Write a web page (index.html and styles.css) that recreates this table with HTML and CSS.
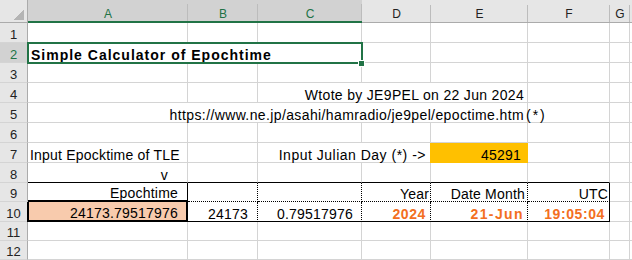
FILE: index.html
```html
<!DOCTYPE html>
<html lang="en">
<head>
    <meta charset="UTF-8">
    <meta name="viewport" content="width=device-width, initial-scale=1.0">
    <title>Simple Calculator of Epochtime</title>
    <link rel="stylesheet" href="styles.css">
</head>
<body>
    <div class="sheet">
        <div class="row">
            <div class="corner"></div>
            <div class="ch sel">A</div>
            <div class="ch sel">B</div>
            <div class="ch sel">C</div>
            <div class="ch">D</div>
            <div class="ch">E</div>
            <div class="ch">F</div>
            <div class="ch">G</div>
            <div class="ch"></div>
        </div>
        <div class="row">
            <div class="rh">1</div>
            <div class="c"></div><div class="c"></div><div class="c"></div><div class="c"></div>
            <div class="c"></div><div class="c"></div><div class="c"></div><div class="c"></div>
        </div>
        <div class="row">
            <div class="rh sel">2</div>
            <div class="c title">Simple Calculator of Epochtime</div>
            <div class="c"></div><div class="c"></div><div class="c"></div><div class="c"></div><div class="c"></div>
        </div>
        <div class="row">
            <div class="rh">3</div>
            <div class="c"></div><div class="c"></div><div class="c"></div><div class="c"></div>
            <div class="c"></div><div class="c"></div><div class="c"></div><div class="c"></div>
        </div>
        <div class="row">
            <div class="rh">4</div>
            <div class="c"></div><div class="c"></div>
            <div class="c r span3 pr3 wide">Wtote by JE9PEL on 22 Jun 2024</div>
            <div class="c"></div><div class="c"></div><div class="c"></div>
        </div>
        <div class="row">
            <div class="rh">5</div>
            <div class="c r span5 pr3 url">https://www.ne.jp/asahi/hamradio/je9pel/epoctime.htm</div>
            <div class="c note">(*)</div>
            <div class="c"></div><div class="c"></div>
        </div>
        <div class="row">
            <div class="rh">6</div>
            <div class="c"></div><div class="c"></div><div class="c"></div><div class="c"></div>
            <div class="c"></div><div class="c"></div><div class="c"></div><div class="c"></div>
        </div>
        <div class="row">
            <div class="rh">7</div>
            <div class="c">Input Epocktime of TLE</div>
            <div class="c"></div>
            <div class="c r span2 pr4 julian">Input Julian Day (*) -&gt;</div>
            <div class="c r jd">45291</div>
            <div class="c"></div><div class="c"></div><div class="c"></div>
        </div>
        <div class="row">
            <div class="rh">8</div>
            <div class="c r tb arrow">v</div>
            <div class="c tb"></div><div class="c tb"></div><div class="c tb"></div>
            <div class="c tb"></div><div class="c tb"></div>
            <div class="c"></div><div class="c"></div>
        </div>
        <div class="row">
            <div class="rh">9</div>
            <div class="c r head-a pr9">Epochtime</div>
            <div class="c dot"></div>
            <div class="c dot"></div>
            <div class="c r dot pr1">Year</div>
            <div class="c r dot pr2">Date Month</div>
            <div class="c r dot end pr1">UTC</div>
            <div class="c"></div><div class="c"></div>
        </div>
        <div class="row">
            <div class="rh">10</div>
            <div class="c r key">24173.79517976</div>
            <div class="c r val pr9">24173</div>
            <div class="c r val pr8">0.79517976</div>
            <div class="c r val out pr4">2024</div>
            <div class="c r val out date pr3">21-Jun</div>
            <div class="c r val out end pr4">19:05:04</div>
            <div class="c"></div><div class="c"></div>
        </div>
        <div class="row">
            <div class="rh">11</div>
            <div class="c"></div><div class="c"></div><div class="c"></div><div class="c"></div>
            <div class="c"></div><div class="c"></div><div class="c"></div><div class="c"></div>
        </div>
        <div class="row">
            <div class="rh">12</div>
            <div class="c"></div><div class="c"></div><div class="c"></div><div class="c"></div>
            <div class="c"></div><div class="c"></div><div class="c"></div><div class="c"></div>
        </div>

        <div class="selection"></div>
    </div>
</body>
</html>
```

FILE: styles.css
```css
* {
    box-sizing: border-box;
}

body {
    margin: 0;
    font-family: "Liberation Sans", "Noto Sans CJK JP", sans-serif;
    font-size: 14px;
    color: #000;
    background: #fff;
}

.sheet {
    position: relative;
    display: grid;
    grid-template-columns: 28px 160px 70px 104px 69px 97px 82px 20px 1fr;
    grid-template-rows: 23px repeat(8, 20px) 19px 20px 19px 19px;
    width: 632px;
    height: 260px;
    overflow: hidden;
}

.row {
    display: contents;
}

/* headers */
.corner {
    display: flex;
    justify-content: flex-end;
    align-items: flex-end;
    padding: 0 3px 2px 0;
    background: #e6e6e6;
    border-right: 1px solid #ababab;
    border-bottom: 1px solid #ababab;
}
.corner::after {
    content: "";
    width: 10px;
    height: 10px;
    background: linear-gradient(to bottom right, transparent 50%, #b4b4b4 50%);
}

.ch {
    display: flex;
    justify-content: center;
    align-items: flex-end;
    padding-bottom: 2px;
    font-size: 12px;
    line-height: 12px;
    color: #222;
    background: linear-gradient(#bcbcbc, #bcbcbc) right bottom / 1px 17px no-repeat #e6e6e6;
    border-bottom: 1px solid #ababab;
}
.ch.sel {
    background-color: #d2d2d2;
    color: #217346;
    border-bottom: 2px solid #217346;
    padding-bottom: 1px;
}

.rh {
    display: flex;
    justify-content: center;
    align-items: flex-end;
    padding-bottom: 1px;
    font-size: 13px;
    line-height: 13px;
    color: #222;
    background: #e6e6e6;
    border-right: 1px solid #ababab;
    border-bottom: 1px solid #d4d4d4;
}
.rh.sel {
    background: #d2d2d2;
    color: #217346;
}

/* cells */
.c {
    display: flex;
    align-items: flex-end;
    min-width: 0;
    padding: 0 2px;
    border-right: 1px solid #d4d4d4;
    border-bottom: 1px solid #d4d4d4;
    line-height: 14px;
    letter-spacing: 0.2px;
    white-space: nowrap;
}
.r {
    justify-content: flex-end;
}

.span2 { grid-column: span 2; }
.span3 { grid-column: span 3; }
.span5 { grid-column: span 5; }

.pr1 { padding-right: 1px; }
.pr2 { padding-right: 2px; }
.pr3 { padding-right: 3px; }
.pr4 { padding-right: 4px; }
.pr8 { padding-right: 8px; }
.pr9 { padding-right: 9px; }

.title {
    grid-column: span 3;
    padding-left: 3px;
    font-weight: bold;
    letter-spacing: 1px;
}

.wide {
    letter-spacing: 0.32px;
}

.url {
    letter-spacing: 0.38px;
}

.note {
    margin-left: -2px;
    padding-left: 0;
    letter-spacing: 2px;
}

.julian {
    letter-spacing: 0.5px;
}

.jd {
    margin-left: -1px;
    padding-right: 6px;
    background: #ffc000;
    border-color: #ffc000;
}

.arrow {
    padding-right: 19px;
}

/* result table */
.tb {
    border-bottom-color: #000;
}

.head-a {
    border-right: 1px solid #000;
    border-bottom: 2px solid #000;
}

.dot {
    border-right: 1px dotted #000;
    border-bottom: 1px dotted #000;
}

.val {
    border-right: 1px dotted #000;
    border-bottom: 1px solid #000;
}

.end {
    border-right: 1px solid #000;
}

.key {
    margin-left: -1px;
    padding-right: 8px;
    background: #f8cbad;
    border-right: 2px solid #000;
    border-bottom: 2px solid #000;
    box-shadow: inset 2px 0 #000;
}

.out {
    color: #f36f21;
    font-weight: bold;
    letter-spacing: 0.6px;
}
.date {
    letter-spacing: 1.4px;
}

/* active cell frame */
.selection {
    position: absolute;
    left: 27px;
    top: 42px;
    width: 336px;
    height: 22px;
    border: 2px solid #217346;
}
.selection::after {
    content: "";
    position: absolute;
    right: -4px;
    bottom: -5px;
    width: 5px;
    height: 5px;
    background: #217346;
    border: 1px solid #fff;
}
```
